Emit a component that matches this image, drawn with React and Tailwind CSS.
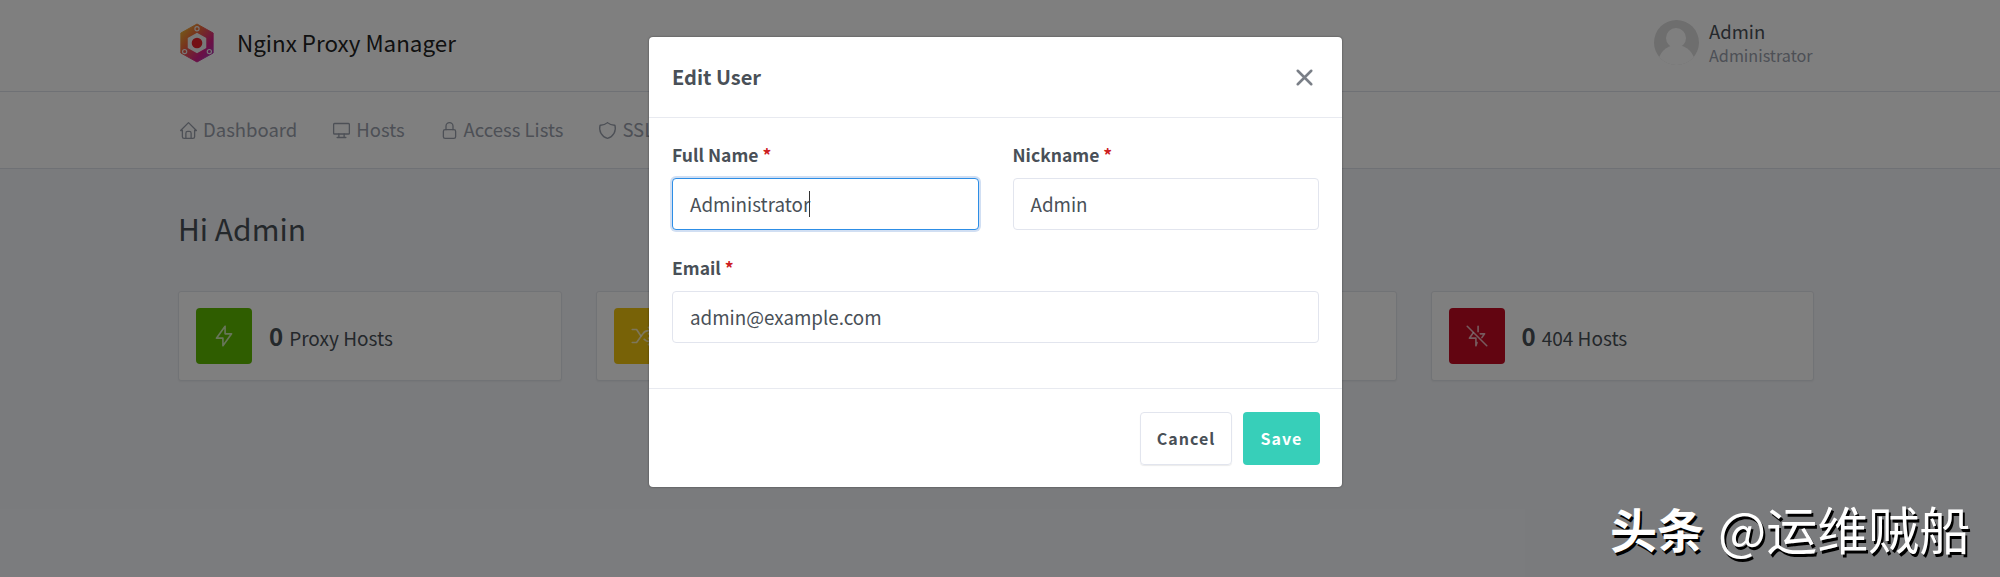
import React from "react";

const font = { fontFamily: '"Noto Sans CJK SC", "Noto Sans", sans-serif' };

const Ic = ({ className = "", children, sw = 2 }) => (
  <svg viewBox="0 0 24 24" fill="none" stroke="currentColor" strokeWidth={sw} strokeLinecap="round" strokeLinejoin="round" className={className}>
    {children}
  </svg>
);

const HomeI = () => <Ic className="w-[21px] h-[21px]" sw={1.5}><path d="M5 12H3l9-9 9 9h-2" /><path d="M5 12v7a2 2 0 0 0 2 2h10a2 2 0 0 0 2-2v-7" /><path d="M9 21v-6a2 2 0 0 1 2-2h2a2 2 0 0 1 2 2v6" /></Ic>;
const DesktopI = () => <Ic className="w-[21px] h-[21px]" sw={1.5}><rect x="3" y="4" width="18" height="12" rx="1" /><path d="M7 20h10M9 16v4M15 16v4" /></Ic>;
const LockI = () => <Ic className="w-[21px] h-[21px]" sw={1.5}><rect x="5" y="11" width="14" height="10" rx="2" /><path d="M8 11V7a4 4 0 0 1 8 0v4" /></Ic>;
const ShieldI = () => <Ic className="w-[21px] h-[21px]" sw={1.5}><path d="M12 3a12 12 0 0 0 8.5 3a12 12 0 0 1-8.5 15a12 12 0 0 1-8.5-15a12 12 0 0 0 8.5-3" /></Ic>;

const NavItem = ({ icon, label }) => (
  <div className="flex items-center gap-[4px] text-[18.5px] text-[#9aa0ac]">
    {icon}
    <span>{label}</span>
  </div>
);

const Stat = ({ color, icon, count, label }) => (
  <div className="flex-1 h-[90px] bg-white border border-[#e3e6ec] rounded-[3px] flex items-center pl-[17px] shadow-[0_1px_2px_rgba(0,0,0,0.05)]">
    <div className={`w-[56px] h-[56px] rounded-[4px] flex items-center justify-center text-white/70 ${color}`}>{icon}</div>
    <div className="ml-[17px] text-[19px] text-[#495057] leading-none flex items-baseline gap-[6px]">
      <b className="text-[24px] font-bold">{count}</b>
      <span>{label}</span>
    </div>
  </div>
);

const Label = ({ children }) => (
  <div className="text-[17.5px] font-bold text-[#495057] leading-[24px] mb-[11px]">
    {children} <span className="text-[#cd201f]">*</span>
  </div>
);

const Input = ({ value, focus, className = "" }) => (
  <div className={`h-[52px] rounded-[4px] border bg-white flex items-center pl-[17px] text-[18.8px] text-[#495057] ${focus ? "border-[#2d8ee6] shadow-[0_0_0_2px_rgba(70,127,207,0.25)]" : "border-[#e2e5ee]"} ${className}`}>
    {value}
    {focus && <span className="inline-block w-px h-[26px] bg-[#333] -ml-px" />}
  </div>
);

const Logo = () => (
  <svg viewBox="0 0 40 44" className="w-[38px] h-[42px]">
    <defs>
      <linearGradient id="lg" x1="0" y1="0" x2="1" y2="1">
        <stop offset="0" stopColor="#e8c830" />
        <stop offset="0.35" stopColor="#f06a3a" />
        <stop offset="0.7" stopColor="#d8208a" />
        <stop offset="1" stopColor="#9a40c0" />
      </linearGradient>
    </defs>
    <path d="M20 2 37 11.5V32.5L20 42 3 32.5V11.5Z" fill="url(#lg)" stroke="url(#lg)" strokeLinejoin="round" strokeWidth="1" />
    <path d="M20 12 29 17V27L20 32 11 27V17Z" fill="#f2f2f2" stroke="#f2f2f2" strokeLinejoin="round" strokeWidth="1.5" />
    <circle cx="20" cy="22" r="5.6" fill="#e8202a" />
    <circle cx="20" cy="7" r="2.2" fill="none" stroke="#eee" strokeWidth="1.2" />
    <circle cx="7" cy="31" r="2.2" fill="none" stroke="#eee" strokeWidth="1.2" />
    <circle cx="33" cy="31" r="2.2" fill="none" stroke="#eee" strokeWidth="1.2" />
  </svg>
);

export default function App() {
  return (
    <div style={font} className="relative w-[2000px] h-[577px] overflow-hidden bg-[#f5f7fb]">
      <header className="h-[92px] bg-white border-b border-[#dfe2ea] pl-[178px] pr-[186px] pb-[6px] flex items-center justify-between">
        <div className="flex items-center gap-[21px] text-[22.4px] text-[#222]">
          <Logo />
          <span>Nginx Proxy Manager</span>
        </div>
        <div className="flex items-center gap-[10px]">
          <div className="w-[45px] h-[45px] rounded-full bg-[#dcdcdc] overflow-hidden relative">
            <div className="absolute left-[12px] top-[8px] w-[20px] h-[20px] rounded-full bg-white" />
            <div className="absolute left-[4px] top-[25px] w-[37px] h-[30px] rounded-t-full bg-white" />
          </div>
          <div className="w-[105px]">
            <div className="text-[18.5px] leading-[25px] text-[#495057]">Admin</div>
            <div className="text-[16.2px] leading-[22px] text-[#9aa0ac]">Administrator</div>
          </div>
        </div>
      </header>

      <nav className="h-[77px] bg-white border-b border-[#dfe2ea] pl-[178px] flex items-center gap-[34px]">
        <NavItem icon={<HomeI />} label="Dashboard" />
        <NavItem icon={<DesktopI />} label="Hosts" />
        <NavItem icon={<LockI />} label="Access Lists" />
        <NavItem icon={<ShieldI />} label="SSL Certificates" />
      </nav>

      <main className="pl-[178px] pr-[186px]">
        <h1 className="text-[30px] leading-[36px] text-[#495057] mt-[41px] mb-[45px]">Hi Admin</h1>
        <div className="flex gap-[34px]">
          <Stat color="bg-[#5eba00]" count="0" label="Proxy Hosts" icon={<Ic className="w-[26px] h-[26px]" sw={1.5}><path d="M13 3v7h6l-8 11v-7H5l8-11" /></Ic>} />
          <Stat color="bg-[#f1c40f]" count="0" label="Redirection Hosts" icon={<Ic className="w-[26px] h-[26px]" sw={1.5}><path d="M21 7h-3a6 6 0 0 0-5 2.7L7 18H3" /><path d="M3 6h4l4 6M14 15l2 1.5a6 6 0 0 0 2 .5h3" /><path d="M18 4l3 3-3 3M18 14l3 3-3 3" /></Ic>} />
          <Stat color="bg-[#7a4fd0]" count="0" label="Streams" icon={<Ic className="w-[26px] h-[26px]" sw={1.5}><path d="M5 12h14" /></Ic>} />
          <Stat color="bg-[#c40a22]" count="0" label="404 Hosts" icon={<Ic className="w-[26px] h-[26px]" sw={1.5}><path d="M3 3l18 18" /><path d="M13 3v5M15 10h4l-2.5 3.5M12 18l-1 3v-7H5l3.5-5" /></Ic>} />
        </div>
      </main>

      <div className="absolute inset-0 bg-black/50">
        <div className="absolute left-[649px] top-[37px] w-[693px] h-[450px] bg-white rounded-[4px] flex flex-col shadow-[0_0_2px_rgba(0,0,0,0.5)]">
          <div className="h-[81px] border-b border-[#e8eaf0] flex items-center justify-between pl-[23px] pr-[24px]">
            <div className="text-[20px] font-bold text-[#495057]">Edit User</div>
            <svg viewBox="0 0 24 24" className="w-[27px] h-[27px] text-[#7a7f87]" fill="none" stroke="currentColor" strokeWidth="2.3" strokeLinecap="round"><path d="M6 6l12 12M18 6L6 18" /></svg>
          </div>
          <div className="h-[271px] border-b border-[#e8eaf0] pt-[25px] px-[23px]">
            <div className="flex gap-[34px]">
              <div className="w-[307px]">
                <Label>Full Name</Label>
                <Input value="Administrator" focus />
              </div>
              <div className="w-[307px]">
                <Label>Nickname</Label>
                <Input value="Admin" />
              </div>
            </div>
            <div className="mt-[26px]">
              <Label>Email</Label>
              <Input value="admin@example.com" />
            </div>
          </div>
          <div className="flex-1 flex items-center justify-end gap-[11px] pr-[22px]">
            <div className="w-[92px] h-[53px] rounded-[4px] border border-[#e2e5ee] shadow-[0_1px_1px_rgba(0,0,0,0.08)] flex items-center justify-center text-[16px] font-bold tracking-[1px] text-[#495057]">Cancel</div>
            <div className="w-[77px] h-[53px] rounded-[4px] bg-[#37cfb9] flex items-center justify-center text-[16px] font-bold tracking-[1px] text-white">Save</div>
          </div>
        </div>
        <div className="absolute left-[1610px] top-[490px] flex items-center text-white leading-[76px] whitespace-nowrap [text-shadow:2px_3px_0_#000]">
          <b className="font-bold text-[47px]">头条</b>
          <span className="ml-[14px] text-[51px]">@运维贼船</span>
        </div>
      </div>
    </div>
  );
}
